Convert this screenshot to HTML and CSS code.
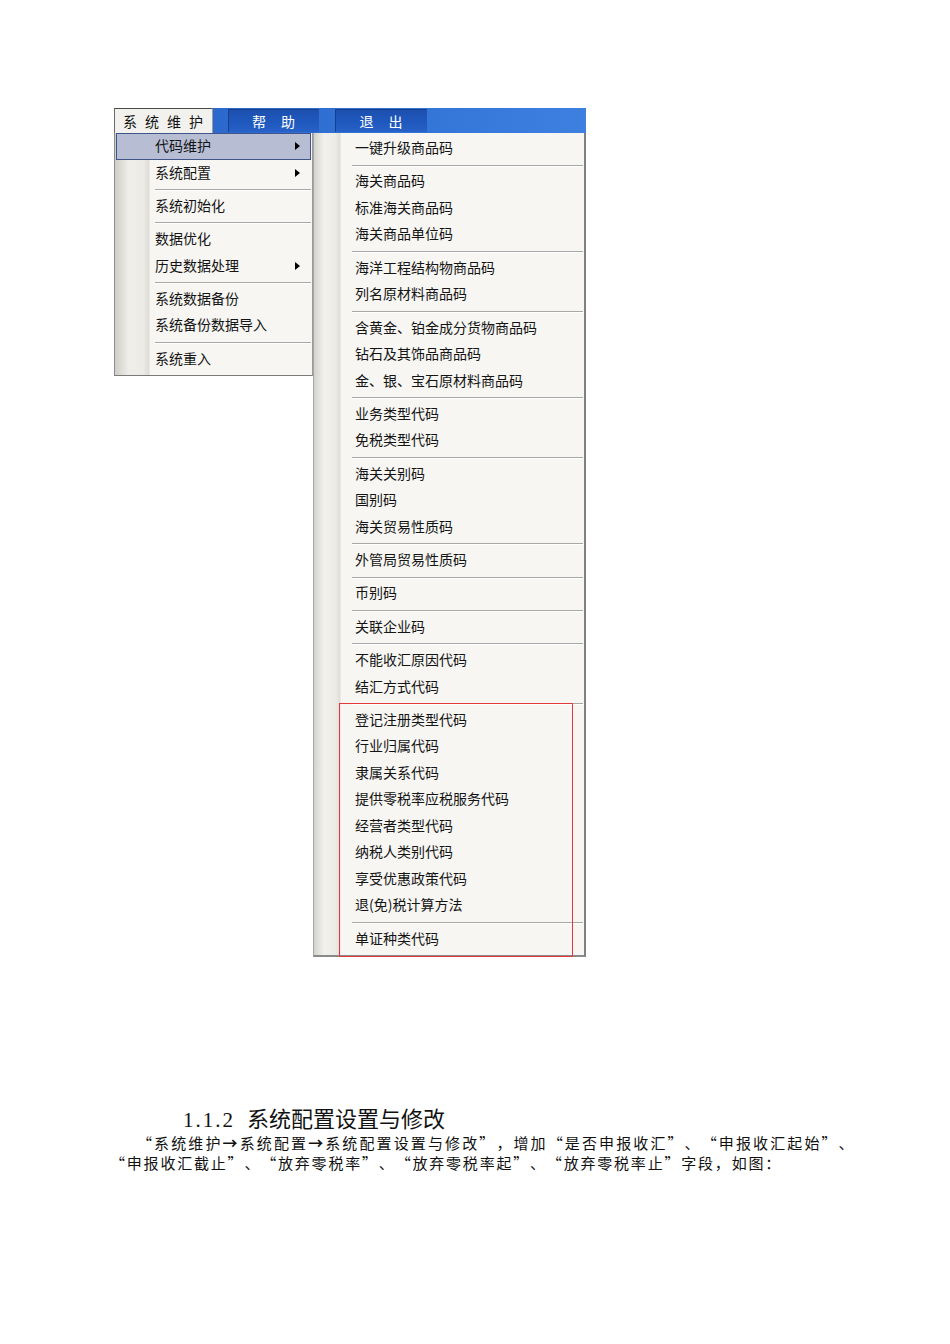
FILE: index.html
```html
<!DOCTYPE html>
<html lang="zh-CN">
<head>
<meta charset="utf-8">
<title>系统维护</title>
<link rel="stylesheet" href="styles.css">
</head>
<body>
<div class="shot">
  <div class="menubar">
    <div class="mb-sys">系统维护</div>
    <div class="mb-tab mb-help">帮助</div>
    <div class="mb-tab mb-exit">退出</div>
  </div>
  <div class="menus">
    <div class="menu lmenu">
      <div class="item active">代码维护<span class="arrow"></span></div>
      <div class="item">系统配置<span class="arrow"></span></div>
      <div class="sep"></div>
      <div class="item">系统初始化</div>
      <div class="sep"></div>
      <div class="item">数据优化</div>
      <div class="item">历史数据处理<span class="arrow"></span></div>
      <div class="sep"></div>
      <div class="item">系统数据备份</div>
      <div class="item">系统备份数据导入</div>
      <div class="sep"></div>
      <div class="item">系统重入</div>
    </div>
    <div class="menu rmenu">
      <div class="item">一键升级商品码</div>
      <div class="sep"></div>
      <div class="item">海关商品码</div>
      <div class="item">标准海关商品码</div>
      <div class="item">海关商品单位码</div>
      <div class="sep"></div>
      <div class="item">海洋工程结构物商品码</div>
      <div class="item">列名原材料商品码</div>
      <div class="sep"></div>
      <div class="item">含黄金、铂金成分货物商品码</div>
      <div class="item">钻石及其饰品商品码</div>
      <div class="item">金、银、宝石原材料商品码</div>
      <div class="sep"></div>
      <div class="item">业务类型代码</div>
      <div class="item">免税类型代码</div>
      <div class="sep"></div>
      <div class="item">海关关别码</div>
      <div class="item">国别码</div>
      <div class="item">海关贸易性质码</div>
      <div class="sep"></div>
      <div class="item">外管局贸易性质码</div>
      <div class="sep"></div>
      <div class="item">币别码</div>
      <div class="sep"></div>
      <div class="item">关联企业码</div>
      <div class="sep"></div>
      <div class="item">不能收汇原因代码</div>
      <div class="item">结汇方式代码</div>
      <div class="sep"></div>
      <div class="item">登记注册类型代码</div>
      <div class="item">行业归属代码</div>
      <div class="item">隶属关系代码</div>
      <div class="item">提供零税率应税服务代码</div>
      <div class="item">经营者类型代码</div>
      <div class="item">纳税人类别代码</div>
      <div class="item">享受优惠政策代码</div>
      <div class="item">退(免)税计算方法</div>
      <div class="sep"></div>
      <div class="item">单证种类代码</div>
    </div>
    <div class="redbox"></div>
  </div>
</div>

<section class="doc">
  <h3 class="doc-title"><span class="num">1.1.2</span>系统配置设置与修改</h3>
  <p class="doc-text">
    <span class="line1"><span class="ql">“</span>系统维护<b class="arr">→</b>系统配置<b class="arr">→</b>系统配置设置与修改<span class="qr">”</span>，增加<span class="ql">“</span>是否申报收汇<span class="qr">”</span>、<span class="ql">“</span>申报收汇起始<span class="qr">”</span>、</span>
    <span class="line2"><span class="ql">“</span>申报收汇截止<span class="qr">”</span>、<span class="ql">“</span>放弃零税率<span class="qr">”</span>、<span class="ql">“</span>放弃零税率起<span class="qr">”</span>、<span class="ql">“</span>放弃零税率止<span class="qr">”</span>字段，如图：</span>
  </p>
</section>
</body>
</html>
```

FILE: styles.css
```css
html, body {
  margin: 0;
  padding: 0;
  background: #ffffff;
}

body {
  font-family: "Noto Sans CJK SC", "Liberation Sans", sans-serif;
  color: #000;
}

.shot {
  margin: 108px 0 0 114px;
  width: 472px;
}

/* ---------- menu bar ---------- */
.menubar {
  display: flex;
  height: 25px;
  background: linear-gradient(to right, #2a63c8 0%, #3274d6 60%, #3d80e0 100%);
  font-size: 14px;
  line-height: 24px;
}

.mb-sys {
  box-sizing: border-box;
  flex: 0 0 99px;
  height: 25px;
  padding-left: 8px;
  letter-spacing: 8px;
  white-space: nowrap;
  overflow: hidden;
  background: #f2f1ed;
  border-top: 1px solid #4a4a4a;
  border-left: 1px solid #6b6b6b;
  border-right: 1px solid #9b9b9b;
  color: #111;
}

.mb-tab {
  height: 23px;
  margin-top: 1px;
  color: #ffffff;
  text-align: center;
  white-space: nowrap;
  letter-spacing: 15px;
  text-indent: 15px;
  background: linear-gradient(to bottom, #1c4fae 0%, #1f58bd 55%, #2762c8 100%);
  box-shadow: inset 1px 1px 0 #173f8c;
}

.mb-help {
  margin-left: 15px;
  flex: 0 0 91px;
}

.mb-exit {
  margin-left: 16px;
  flex: 0 0 92px;
}

/* ---------- menus ---------- */
.menus {
  position: relative;
  display: flex;
  align-items: flex-start;
}

.menu {
  box-sizing: border-box;
  background-color: #f7f6f3;
  font-size: 14px;
  color: #141414;
}

.lmenu {
  width: 199px;
  padding: 0 1px 3px 1px;
  border-left: 1px solid #8d8d8d;
  border-bottom: 1px solid #7a7a7a;
  border-right: 1px solid #9a9a9a;
  background-image: linear-gradient(to right, #cfcdc7 0px, #efeeea 14px, #ecebe6 28px, #dddcd6 34px, #f7f6f3 35px);
}

.rmenu {
  width: 273px;
  padding: 2px 1px 3px 1px;
  border-left: 1px solid #a8a8a8;
  border-right: 2px solid #808080;
  border-bottom: 2px solid #8a8a8a;
  background-image: linear-gradient(to right, #d2d1cb 0px, #f2f1ed 10px, #ebeae5 22px, #dedcd6 26px, #f7f6f3 27px);
}

.item {
  position: relative;
  box-sizing: border-box;
  height: 26.5px;
  line-height: 25px;
  padding-left: 40px;
  white-space: nowrap;
}

.lmenu .item {
  padding-left: 39px;
}

.item.active {
  background: #b7bed4;
  border: 1px solid #3f5488;
  padding-left: 38px;
  line-height: 23px;
}

.arrow {
  position: absolute;
  right: 11px;
  top: 9px;
  width: 0;
  height: 0;
  border-top: 4px solid transparent;
  border-bottom: 4px solid transparent;
  border-left: 5px solid #000;
}

.item.active .arrow {
  right: 10px;
  top: 8px;
}

.sep {
  height: 1px;
  margin: 3px 0 1.75px 39px;
  background: #a8a8a8;
  border-bottom: 1px solid #ffffff;
}

.rmenu .sep {
  margin: 3px 0 1.85px 37px;
}

.redbox {
  position: absolute;
  left: 225px;
  top: 570px;
  width: 234px;
  height: 254px;
  box-sizing: border-box;
  border: 1.5px solid #e23a3a;
  pointer-events: none;
}

/* ---------- document text ---------- */
.doc {
  margin: 149px 0 0 110px;
  width: 745px;
}

.doc-title {
  margin: 0 0 0 73px;
  font-weight: normal;
  font-size: 22px;
  line-height: 22px;
  color: #111;
  font-family: "Noto Sans CJK SC", serif;
}

.doc-title .num {
  font-family: "Liberation Serif", serif;
  font-size: 21px;
  letter-spacing: 2px;
  margin-right: 12px;
}

.doc-text {
  margin: 2px 0 0 0;
  font-size: 15px;
  line-height: 20px;
  letter-spacing: 1.4px;
  color: #111;
  font-family: "Noto Sans CJK SC", sans-serif;
}

.line1 {
  display: block;
  padding-left: 27px;
  text-align: justify;
  text-align-last: justify;
  white-space: nowrap;
}

.line2 {
  display: block;
  white-space: nowrap;
  letter-spacing: 1.8px;
}

.ql,
.qr {
  display: inline-block;
  width: 15px;
  letter-spacing: 0;
  margin-right: 1.4px;
}

.line2 .ql,
.line2 .qr {
  margin-right: 1.8px;
}

.ql {
  text-align: right;
}

.qr {
  text-align: left;
}

.arr {
  font-weight: bold;
}
```
